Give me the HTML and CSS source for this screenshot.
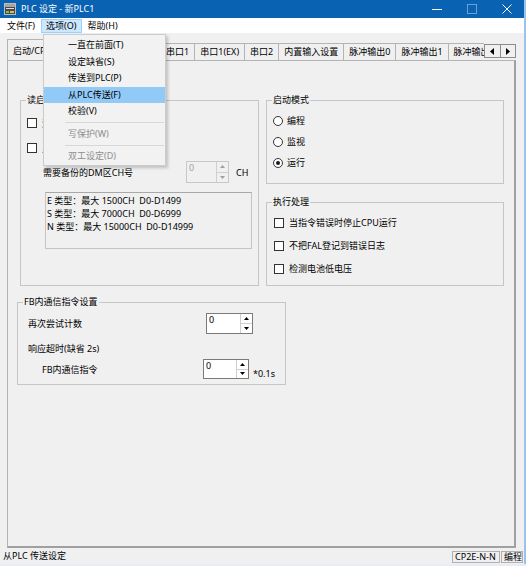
FILE: index.html
```html
<!DOCTYPE html>
<html lang="zh-CN">
<head>
    <meta charset="UTF-8">
    <title>PLC 设定 - 新PLC1</title>
    <link rel="stylesheet" href="styles.css">
</head>
<body>
<div class="window">
    <div class="titlebar">
        <svg class="app-icon" viewBox="0 0 12 12">
            <rect x="0.5" y="0.5" width="11" height="11" fill="#4b4b4b" stroke="#bdbdbd"/>
            <rect x="1" y="1" width="10" height="3" fill="#a5a5a5"/>
            <rect x="2" y="5" width="8" height="1" fill="#dcdcdc"/>
            <rect x="2" y="8" width="3" height="2" fill="#7cc242"/>
            <rect x="6" y="8" width="4" height="2" fill="#e0c040"/>
        </svg>
        <span class="title">PLC 设定 - 新PLC1</span>
        <div class="caption-buttons">
            <span class="cap-btn"><svg width="10" height="10"><line x1="0" y1="5.5" x2="10" y2="5.5" stroke="#fff"/></svg></span>
            <span class="cap-btn"><svg width="10" height="10"><rect x="0.5" y="0.5" width="9" height="9" fill="none" stroke="#6d9fd4"/></svg></span>
            <span class="cap-btn"><svg width="10" height="10"><path d="M0.5 0.5 L9.5 9.5 M9.5 0.5 L0.5 9.5" stroke="#fff"/></svg></span>
        </div>
    </div>

    <div class="menubar">
        <span class="menu-item">文件(F)</span>
        <span class="menu-item open">选项(O)</span>
        <span class="menu-item">帮助(H)</span>
    </div>

    <div class="client">
        <div class="tab-row">
            <div class="tab-strip">
                <span class="tab active">启动/CPU设定</span>
                <span class="tab">时间设定</span>
                <span class="tab">以太网</span>
                <span class="tab">串口1</span>
                <span class="tab">串口1(EX)</span>
                <span class="tab">串口2</span>
                <span class="tab">内置输入设置</span>
                <span class="tab">脉冲输出0</span>
                <span class="tab">脉冲输出1</span>
                <span class="tab">脉冲输出2</span>
            </div>
            <div class="tab-scroll">
                <span class="scroll-btn"><svg width="4" height="7"><polygon points="4,0 4,7 0,3.5"/></svg></span>
                <span class="scroll-btn"><svg width="4" height="7"><polygon points="0,0 4,3.5 0,7"/></svg></span>
            </div>
        </div>

        <div class="tab-panel">
            <div class="top-row">
                <fieldset class="group">
                    <legend>读启动数据</legend>
                    <label class="opt opt-read"><span class="check"></span>清除保持区域(HR/DM/CNT)</label>
                    <label class="opt opt-read"><span class="check"></span>从备份存储器读取DM区</label>
                    <div class="dm-row">
                        <span class="dm-label">需要备份的DM区CH号</span>
                        <span class="spin spin-dm disabled">
                            <span class="spin-value">0</span>
                            <span class="spin-btns">
                                <span class="spin-btn"><svg width="5" height="3"><polygon points="0,3 2.5,0 5,3"/></svg></span>
                                <span class="spin-btn"><svg width="5" height="3"><polygon points="0,0 5,0 2.5,3"/></svg></span>
                            </span>
                        </span>
                        <span class="unit">CH</span>
                    </div>
                    <div class="type-box">E 类型：最大 1500CH  D0-D1499
S 类型：最大 7000CH  D0-D6999
N 类型：最大 15000CH  D0-D14999</div>
                </fieldset>

                <div class="right-col">
                    <fieldset class="group group-mode">
                        <legend>启动模式</legend>
                        <label class="opt opt-radio"><span class="radio"></span>编程</label>
                        <label class="opt opt-radio"><span class="radio"></span>监视</label>
                        <label class="opt opt-radio"><span class="radio checked"></span>运行</label>
                    </fieldset>
                    <fieldset class="group group-exec">
                        <legend>执行处理</legend>
                        <label class="opt opt-exec"><span class="check"></span>当指令错误时停止CPU运行</label>
                        <label class="opt opt-exec"><span class="check"></span>不把FAL登记到错误日志</label>
                        <label class="opt opt-exec"><span class="check"></span>检测电池低电压</label>
                    </fieldset>
                </div>
            </div>

            <fieldset class="group group-fb">
                <legend>FB内通信指令设置</legend>
                <div class="fb-row fb-retry">
                    <span class="fb-label">再次尝试计数</span>
                    <span class="spin">
                        <span class="spin-value">0</span>
                        <span class="spin-btns">
                            <span class="spin-btn"><svg width="5" height="3"><polygon points="0,3 2.5,0 5,3"/></svg></span>
                            <span class="spin-btn"><svg width="5" height="3"><polygon points="0,0 5,0 2.5,3"/></svg></span>
                        </span>
                    </span>
                </div>
                <div class="fb-row fb-timeout">响应超时(缺省 2s)</div>
                <div class="fb-row fb-cmd">
                    <span class="fb-label">FB内通信指令</span>
                    <span class="spin">
                        <span class="spin-value">0</span>
                        <span class="spin-btns">
                            <span class="spin-btn"><svg width="5" height="3"><polygon points="0,3 2.5,0 5,3"/></svg></span>
                            <span class="spin-btn"><svg width="5" height="3"><polygon points="0,0 5,0 2.5,3"/></svg></span>
                        </span>
                    </span>
                    <span class="fb-unit">*0.1s</span>
                </div>
            </fieldset>
        </div>
    </div>

    <div class="statusbar">
        <span class="status-text">从PLC 传送设定</span>
        <span class="status-cell cell-model">CP2E-N-N</span>
        <span class="status-cell cell-mode">编程</span>
    </div>

    <div class="dropdown">
        <div class="dd-item">一直在前面(T)</div>
        <div class="dd-item">设定缺省(S)</div>
        <div class="dd-item">传送到PLC(P)</div>
        <div class="dd-item hover">从PLC传送(F)</div>
        <div class="dd-item">校验(V)</div>
        <div class="dd-sep"></div>
        <div class="dd-item disabled">写保护(W)</div>
        <div class="dd-sep"></div>
        <div class="dd-item disabled">双工设定(D)</div>
    </div>
</div>
</body>
</html>
```

FILE: styles.css
```css
* {
    box-sizing: border-box;
}
body {
    margin: 0;
    background-color: #e6edf5;
    font-family: "Noto Sans", "Noto Sans CJK SC", sans-serif;
    font-size: 9px;
    color: #000;
}
.window {
    position: relative;
    width: 526px;
    height: 564px;
    border-right: 2px solid #9dc1e8;
    background-color: #f0f0f0;
    display: flex;
    flex-direction: column;
}

/* title bar */
.titlebar {
    height: 18px;
    flex-shrink: 0;
    background-color: #0a62b3;
    color: #fff;
    display: flex;
    align-items: center;
}
.app-icon {
    width: 12px;
    height: 12px;
    margin-left: 4px;
}
.title {
    margin-left: 5px;
    line-height: 18px;
}
.caption-buttons {
    margin-left: auto;
    display: flex;
}
.cap-btn {
    width: 35px;
    height: 18px;
    display: flex;
    align-items: center;
    justify-content: center;
}

/* menu bar */
.menubar {
    height: 15px;
    flex-shrink: 0;
    background-color: #fff;
    display: flex;
    gap: 1px;
    padding-left: 2px;
}
.menu-item {
    height: 14px;
    margin-top: 1px;
    line-height: 12px;
    padding: 0 4px;
    border: 1px solid transparent;
}
.menu-item.open {
    background-color: #cce8ff;
    border-color: #99d1ff;
}
.dropdown {
    position: absolute;
    left: 43px;
    top: 34px;
    width: 123px;
    padding: 2px 0 0;
    background-color: #f2f2f2;
    border: 1px solid #cccccc;
    box-shadow: 2px 2px 3px rgba(0, 0, 0, 0.2);
}
.dd-item {
    height: 16.5px;
    line-height: 16.5px;
    padding-left: 24px;
    white-space: nowrap;
}
.dd-item.hover {
    background-color: #91c9f7;
}
.dd-item.disabled {
    color: #8d8d8d;
}
.dd-sep {
    height: 1px;
    margin: 2.5px 1px 2.5px 21px;
    background-color: #d7d7d7;
}

/* tabs */
.client {
    flex: 1;
    display: flex;
    flex-direction: column;
    padding: 6px 8px 0 7px;
    min-height: 0;
}
.tab-row {
    height: 21px;
    flex-shrink: 0;
    display: flex;
}
.tab-strip {
    flex: 1;
    min-width: 0;
    display: flex;
    align-items: flex-end;
    overflow: hidden;
}
.tab {
    flex-shrink: 0;
    height: 17px;
    line-height: 16px;
    padding: 0 5px;
    border-top: 1px solid #b4b4b4;
    border-right: 1px solid #b4b4b4;
    white-space: nowrap;
}
.tab.active {
    height: 21px;
    padding: 2px 5px 0 5px;
    line-height: 17px;
    border-left: 1px solid #b4b4b4;
}
.tab-scroll {
    width: 32px;
    height: 14px;
    margin-top: 5px;
    display: flex;
    border: 1px solid #8c8c8c;
    background-color: #f0f0f0;
}
.scroll-btn {
    flex: 1;
    display: flex;
    align-items: center;
    justify-content: center;
}
.scroll-btn + .scroll-btn {
    border-left: 1px solid #8c8c8c;
}
.tab-panel {
    flex: 1;
    border-top: 1px solid #b4b4b4;
    border-left: 1px solid #b4b4b4;
    border-right: 2px solid #a0a0a0;
    border-bottom: 2px solid #a0a0a0;
    padding: 33px 0 0 9px;
}

/* group boxes */
.top-row {
    display: grid;
    grid-template-columns: 239px 238px;
    column-gap: 7px;
    margin-left: 3px;
}
.group {
    margin: 0;
    min-width: 0;
    padding: 0 6px;
    border: 1px solid #c6c6c6;
}
.group legend {
    padding: 0 1px;
    margin-left: -1px;
    line-height: 12px;
}
.right-col {
    display: flex;
    flex-direction: column;
    gap: 12px;
}
.opt {
    display: flex;
    align-items: center;
    white-space: nowrap;
}
.check {
    width: 10px;
    height: 10px;
    margin-right: 5px;
    border: 1px solid #333;
    background-color: #fff;
    flex-shrink: 0;
}
.radio {
    width: 10px;
    height: 10px;
    margin-right: 4px;
    border: 1px solid #333;
    border-radius: 50%;
    background-color: #fff;
    flex-shrink: 0;
    display: flex;
    align-items: center;
    justify-content: center;
}
.radio.checked::after {
    content: "";
    width: 4px;
    height: 4px;
    border-radius: 50%;
    background-color: #1a1a1a;
}
.opt-read {
    height: 16px;
    margin-top: 9px;
}
.group-mode {
    padding-bottom: 10px;
}
.opt-radio {
    height: 21px;
}
.opt-radio:first-of-type {
    margin-top: 4px;
}
.group-exec {
    padding-bottom: 5px;
}
.opt-exec {
    height: 23px;
    margin-left: 1px;
}
.opt-exec:first-of-type {
    margin-top: 3px;
}
.dm-row {
    height: 22px;
    margin-top: 5px;
    display: flex;
    align-items: center;
}
.dm-label {
    width: 143px;
    margin-left: 16px;
    white-space: nowrap;
}
.unit {
    margin-left: 7px;
}
.type-box {
    width: 207px;
    height: 57px;
    margin: 9px 0 0 18px;
    padding: 1px 0 0 1px;
    border: 1px solid #c4c4c4;
    border-top-color: #a8a8a8;
    line-height: 13px;
    white-space: pre;
}

/* spin boxes */
.spin {
    width: 47px;
    height: 21px;
    display: flex;
    border: 1px solid #7a7a7a;
    background-color: #fff;
}
.spin-value {
    flex: 1;
    padding-left: 2px;
    line-height: 11px;
}
.spin-btns {
    width: 12px;
    display: flex;
    flex-direction: column;
    border-left: 1px solid #cfcfcf;
}
.spin-btn {
    flex: 1;
    display: flex;
    align-items: center;
    justify-content: center;
}
.spin-btn + .spin-btn {
    border-top: 1px solid #cfcfcf;
}
.spin.spin-dm {
    width: 43px;
    height: 22px;
}
.spin.disabled {
    border-color: #c8c8c8;
    background-color: #f0f0f0;
    color: #a0a0a0;
}
.spin.disabled polygon {
    fill: #a0a0a0;
}

/* FB group */
.group-fb {
    width: 269px;
    margin-top: 10px;
    padding: 0 10px 5px;
}
.group-fb legend {
    margin-left: -5px;
}
.fb-row {
    display: flex;
    align-items: center;
    white-space: nowrap;
}
.fb-retry {
    height: 21px;
    margin-top: 5px;
}
.fb-retry .fb-label {
    width: 178px;
}
.fb-timeout {
    height: 16px;
    margin-top: 6px;
}
.fb-cmd {
    height: 20px;
    margin-top: 3px;
}
.fb-cmd .spin {
    height: 20px;
}
.fb-cmd .fb-label {
    width: 164px;
    margin-left: 14px;
}
.fb-unit {
    margin: 8px 0 0 4px;
}

/* status bar */
.statusbar {
    height: 16px;
    flex-shrink: 0;
    display: flex;
    align-items: flex-end;
    gap: 1px;
    padding: 0 1px 1px 3px;
}
.status-text {
    flex: 1;
    align-self: center;
}
.status-cell {
    height: 12px;
    line-height: 10px;
    padding: 0 2px;
    border: 1px solid #b0b0b0;
    white-space: nowrap;
}
.cell-model {
    width: 48px;
}
.cell-mode {
    width: 22px;
}
```
